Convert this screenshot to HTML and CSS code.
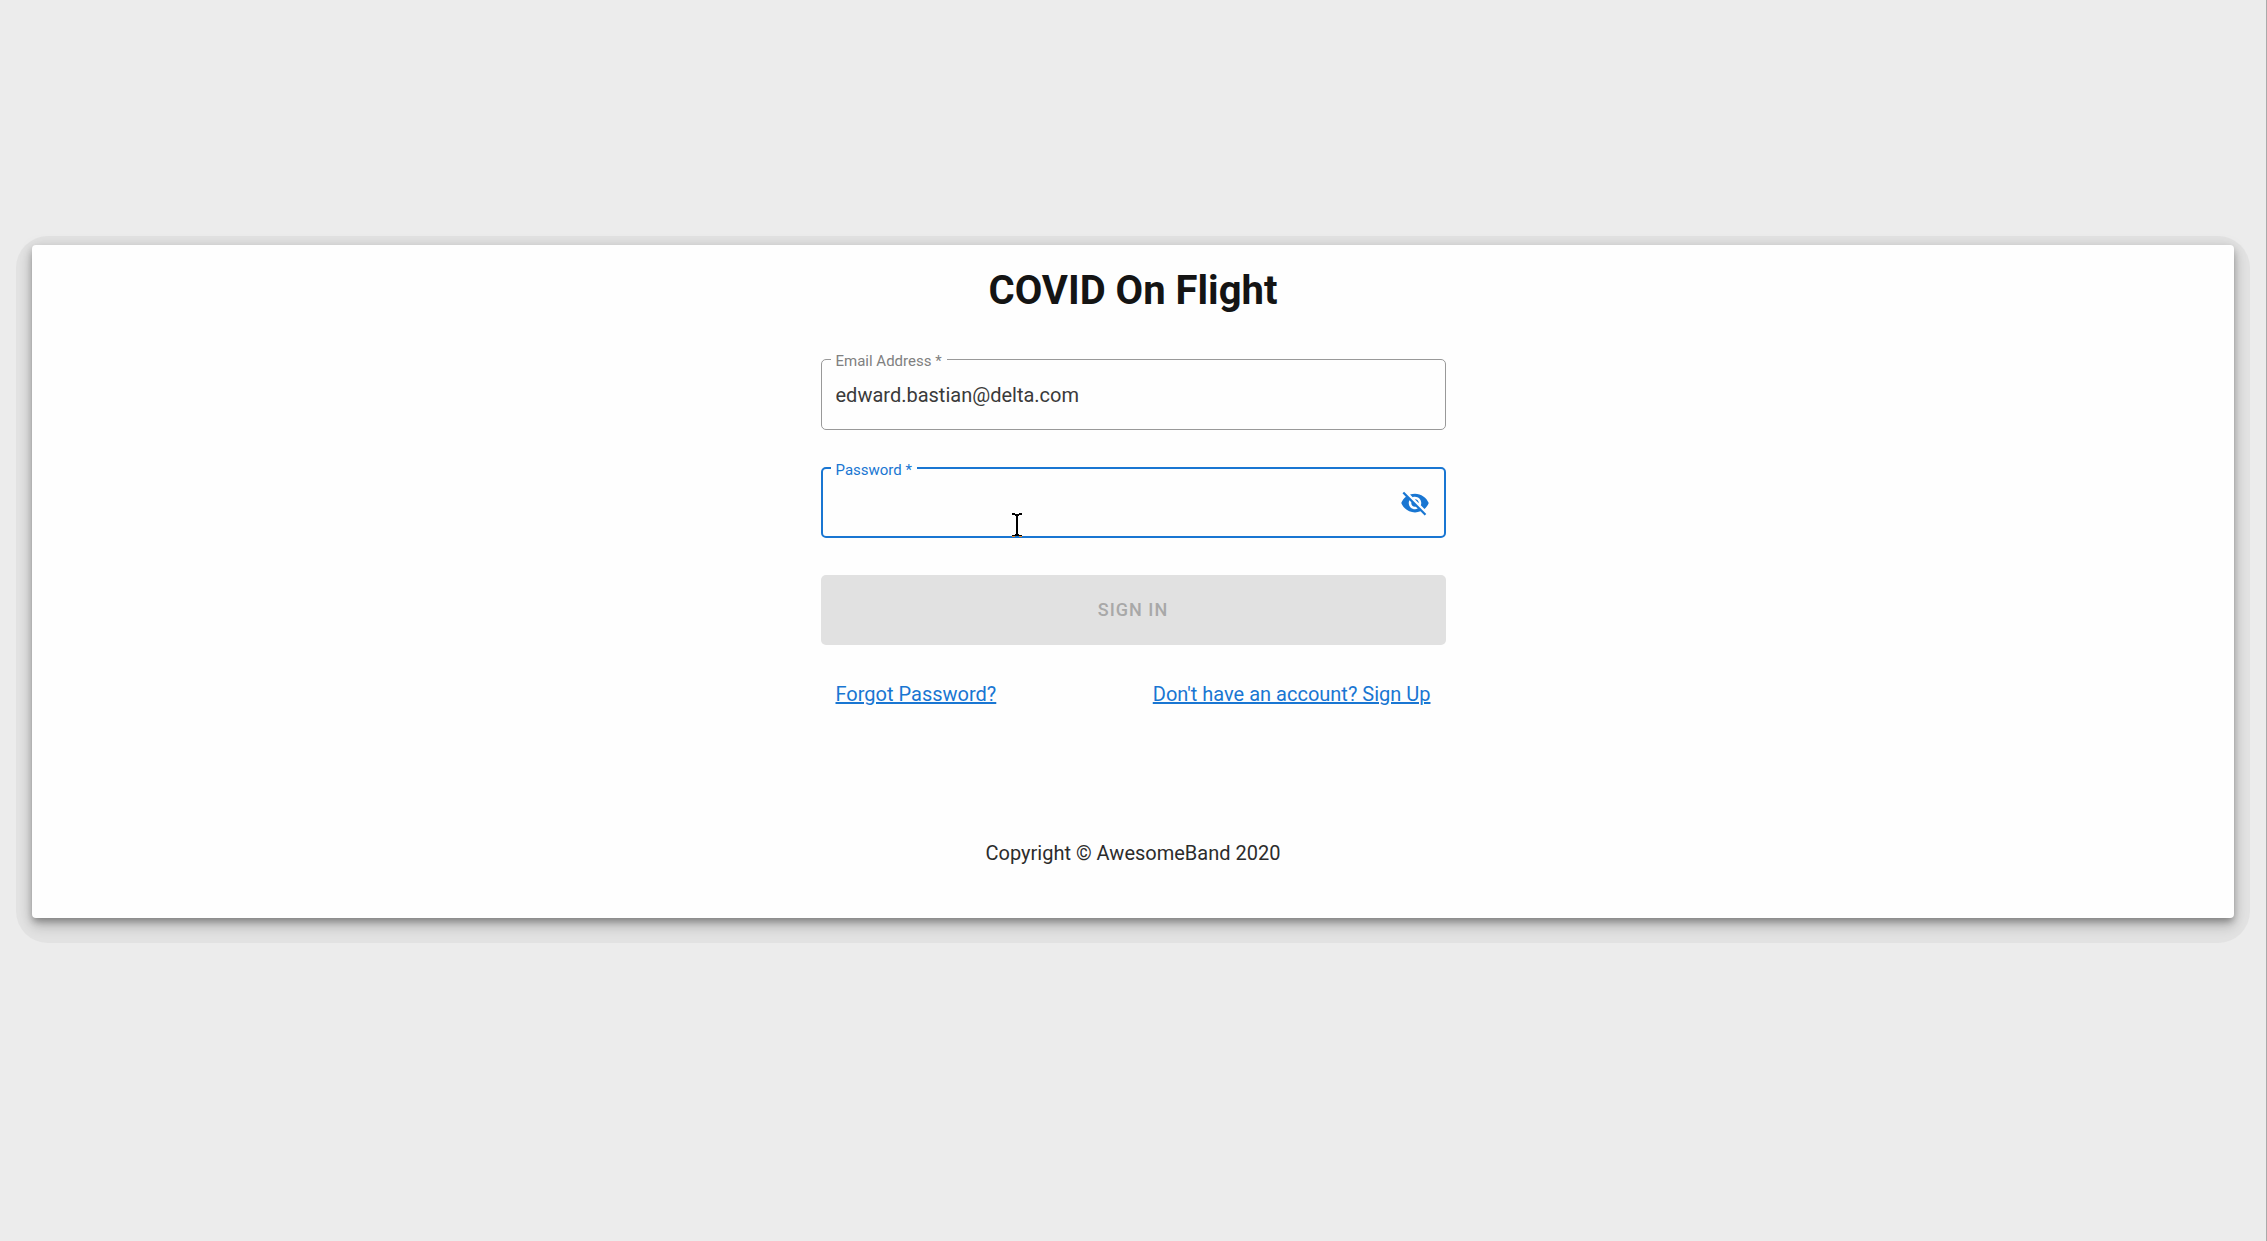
FILE: index.html
```html
<!DOCTYPE html>
<html lang="en">
<head>
<meta charset="utf-8">
<title>COVID On Flight</title>
<link rel="stylesheet" href="styles.css">
</head>
<body>
<main class="card">
  <h1 class="title">COVID On Flight</h1>
  <form class="form">
    <div class="field">
      <label class="label" for="email">Email Address *</label>
      <input class="input" id="email" type="email" value="edward.bastian@delta.com">
    </div>
    <div class="field field-active">
      <label class="label" for="password">Password *</label>
      <input class="input" id="password" type="password">
      <button class="toggle" type="button" aria-label="Show password">
        <svg class="eye" viewBox="0 0 24 24" aria-hidden="true"><path fill="currentColor" d="M12 7c2.760 0 5 2.240 5 5 0 .65-.13 1.260-.36 1.830l2.920 2.920c1.510-1.260 2.700-2.890 3.430-4.750-1.730-4.390-6-7.500-11-7.500-1.400 0-2.740.25-3.980.7l2.160 2.160C10.740 7.130 11.350 7 12 7zM2 4.270l2.280 2.280.46.46C3.080 8.300 1.780 10.020 1 12c1.730 4.390 6 7.500 11 7.500 1.550 0 3.030-.3 4.380-.84l.42.42L19.730 22 21 20.730 3.270 3 2 4.270zM7.530 9.800l1.550 1.550c-.05.21-.08.43-.08.65 0 1.660 1.340 3 3 3 .22 0 .44-.03.65-.08l1.550 1.550c-.67.33-1.410.53-2.200.53-2.760 0-5-2.240-5-5 0-.79.2-1.530.53-2.200zm4.310-.78l3.150 3.150.02-.16c0-1.660-1.340-3-3-3l-.17.01z"/></svg>
      </button>
      <svg class="pointer" viewBox="0 0 10 24" shape-rendering="crispEdges" aria-hidden="true">
        <path d="M0 0h3v1h4V0h3v2H7v1H6v18h1v1h3v1H0v-1h3v-1h1V3H3V2H0z"/>
        <path fill="#f08a24" d="M0 23h3v1H0zM7 23h3v1H7z"/>
      </svg>
    </div>
    <button class="submit" type="submit" disabled>SIGN IN</button>
    <nav class="links">
      <a href="#forgot">Forgot Password?</a>
      <a href="#signup">Don't have an account? Sign Up</a>
    </nav>
  </form>
  <footer class="copyright">Copyright © AwesomeBand 2020</footer>
</main>
</body>
</html>
```
FILE: styles.css
```css
* {
  box-sizing: border-box;
}

body {
  margin: 0;
  min-height: 100vh;
  padding: 245px 32px 0;
  border-right: 1px solid #aaa;
  background: #ececec;
  color: #2c2c2c;
  font: 20px/24px Roboto, sans-serif;
}

.card {
  position: relative;
  z-index: 0;
  display: flex;
  flex-direction: column;
  align-items: center;
  padding: 22px 20px 53px;
}

/* Soft outer rim of the raised card */
.card::before {
  content: "";
  position: absolute;
  z-index: -2;
  inset: -9px -16px -25px;
  border-radius: 32px;
  background: #e2e2e2;
}

.card::after {
  content: "";
  position: absolute;
  z-index: -1;
  inset: 0;
  border-radius: 4px;
  background: #fefefe;
  box-shadow: 0 4px 6px -1px rgba(0, 0, 0, 0.25), 0 8px 13px 0 rgba(0, 0, 0, 0.2), 0 1px 14px 0 rgba(0, 0, 0, 0.1);
}

.title {
  margin: 0 0 44px;
  color: #141414;
  font-size: 40px;
  font-weight: 700;
  line-height: 48px;
}

.form {
  display: flex;
  flex-direction: column;
  gap: 37px;
  width: 100%;
  max-width: 625px;
}

.field {
  position: relative;
  display: flex;
  align-items: center;
  height: 71px;
  border: 1px solid #999;
  border-radius: 5px;
}

.field-active {
  border: 2px solid #1976d2;
}

.label {
  position: absolute;
  top: -9px;
  left: 9px;
  padding: 0 5px;
  background: #fefefe;
  color: #808080;
  font-size: 15px;
  line-height: 20px;
}

.field-active .label {
  left: 8px;
  color: #1976d2;
}

.input {
  flex: 1;
  min-width: 0;
  height: 100%;
  padding: 0 14px;
  border: 0;
  outline: 0;
  background: none;
  color: #3a3a3a;
  font: inherit;
}

.toggle {
  display: flex;
  margin-right: 14px;
  padding: 0;
  border: 0;
  background: none;
  color: #1976d2;
}

.eye {
  width: 30px;
  height: 30px;
}

.pointer {
  position: absolute;
  top: 44px;
  left: 189px;
  width: 10px;
  height: 24px;
}

.submit {
  height: 70px;
  border: 0;
  border-radius: 5px;
  background: #e1e1e1;
  color: #a8a8a8;
  font: 500 18px/24px Roboto, sans-serif;
  letter-spacing: 1px;
}

.links {
  display: flex;
  justify-content: space-between;
  padding: 0 15px;
}

.links a {
  color: #1976d2;
}

.copyright {
  margin-top: 135px;
}
```
